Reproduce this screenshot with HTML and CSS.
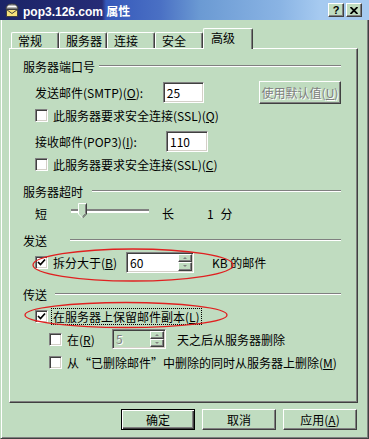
FILE: index.html
```html
<!DOCTYPE html>
<html lang="zh-CN">
    <head>
        <meta charset="UTF-8">
        <title>pop3.126.com 属性</title>
        <link rel="stylesheet" href="styles.css">
    </head>
    <body>
        <div class="window">
            <div class="titlebar">
                <svg class="app-icon" width="16" height="16" viewBox="0 0 16 16">
                    <path d="M2 7 Q2 2 8 2 Q14 2 14 7 Z" fill="#b8b8b8" stroke="#404040"/>
                    <path d="M4 4.5 H12" stroke="#fff"/>
                    <rect x="2.5" y="7.5" width="11" height="7" fill="#f6e27a" stroke="#404040"/>
                    <path d="M2.5 7.5 L8 11.5 L13.5 7.5" fill="none" stroke="#404040"/>
                </svg>
                <span class="title">pop3.126.com 属性</span>
                <div class="caption-btns">
                    <span class="cap-btn">?</span>
                    <span class="cap-btn">
                        <svg width="8" height="7" viewBox="0 0 8 7"><path d="M0.5 0 L7.5 7 M7.5 0 L0.5 7" stroke="#000" stroke-width="1.8"/></svg>
                    </span>
                </div>
            </div>

            <div class="body">
                <div class="tabs">
                    <div class="tab">常规</div>
                    <div class="tab">服务器</div>
                    <div class="tab">连接</div>
                    <div class="tab">安全</div>
                    <div class="tab active">高级</div>
                </div>

                <div class="panel">
                    <div class="group first"><span>服务器端口号</span><i class="sep"></i></div>
                    <div class="row field">
                        <span class="label">发送邮件(SMTP)(<u>O</u>):</span>
                        <span class="input">25</span>
                        <span class="btn disabled wide">使用默认值(<u>U</u>)</span>
                    </div>
                    <div class="row">
                        <span class="check"></span>
                        <span>此服务器要求安全连接(SSL)(<u>Q</u>)</span>
                    </div>
                    <div class="row field">
                        <span class="label">接收邮件(POP3)(<u>I</u>):</span>
                        <span class="input">110</span>
                    </div>
                    <div class="row">
                        <span class="check"></span>
                        <span>此服务器要求安全连接(SSL)(<u>C</u>)</span>
                    </div>

                    <div class="group"><span>服务器超时</span><i class="sep sep-timeout"></i></div>
                    <div class="row">
                        <span>短</span>
                        <div class="slider">
                            <i class="track"></i>
                            <svg class="thumb" width="9" height="16" viewBox="0 0 9 16">
                                <path d="M0.5 11 V0.5 H8.5 V11 L4.5 15 Z" fill="#c0dcc0"/>
                                <path d="M0.5 11 V0.5 H8" fill="none" stroke="#fff"/>
                                <path d="M8.5 0.5 V11 L4.5 15" fill="none" stroke="#404040"/>
                                <path d="M7.5 1.5 V10.5 L4.5 13.5" fill="none" stroke="#808080"/>
                                <path d="M0.5 11 L4.5 15" fill="none" stroke="#fff"/>
                            </svg>
                        </div>
                        <span>长</span>
                        <span class="timeout">1 分</span>
                    </div>

                    <div class="group"><span>发送</span><i class="sep sep-send"></i></div>
                    <div class="row">
                        <span class="check checked">
                            <svg width="9" height="9" viewBox="0 0 9 9"><path d="M1 4 L3.5 6.5 L8 1.5" fill="none" stroke="#000" stroke-width="1.7"/></svg>
                        </span>
                        <span class="label-split">拆分大于(<u>B</u>)</span>
                        <span class="spin">
                            <span class="spin-text">60</span>
                            <span class="spin-btns">
                                <span class="spin-btn"><i class="arrow-up"></i></span>
                                <span class="spin-btn"><i class="arrow-down"></i></span>
                            </span>
                        </span>
                        <span class="unit">KB 的邮件</span>
                    </div>

                    <div class="group group-deliver"><span>传送</span><i class="sep sep-deliver"></i></div>
                    <div class="row">
                        <span class="check checked">
                            <svg width="9" height="9" viewBox="0 0 9 9"><path d="M1 4 L3.5 6.5 L8 1.5" fill="none" stroke="#000" stroke-width="1.7"/></svg>
                        </span>
                        <span class="focus">在服务器上保留邮件副本(<u>L</u>)</span>
                    </div>
                    <div class="row sub">
                        <span class="check"></span>
                        <span class="label-days">在(<u>R</u>)</span>
                        <span class="spin spin-off">
                            <span class="spin-text">5</span>
                            <span class="spin-btns">
                                <span class="spin-btn"><i class="arrow-up"></i></span>
                                <span class="spin-btn"><i class="arrow-down"></i></span>
                            </span>
                        </span>
                        <span class="unit-days">天之后从服务器删除</span>
                    </div>
                    <div class="row sub">
                        <span class="check"></span>
                        <span>从“已删除邮件”中删除的同时从服务器上删除(<u>M</u>)</span>
                    </div>
                </div>

                <div class="buttons">
                    <span class="btn default">确定</span>
                    <span class="btn">取消</span>
                    <span class="btn">应用(<u>A</u>)</span>
                </div>
            </div>

            <!-- red hand-drawn marks over the screenshot -->
            <svg class="marks" width="369" height="439" viewBox="0 0 369 439">
                <ellipse cx="133" cy="265" rx="100" ry="16" fill="none" stroke="#e02020" stroke-width="1.3"/>
                <ellipse cx="126" cy="315" rx="101" ry="12.5" fill="none" stroke="#e02020" stroke-width="1.3"/>
            </svg>
        </div>
    </body>
</html>
```

FILE: styles.css
```css
body{
    margin: 0;
    font-family: "Noto Sans CJK SC", sans-serif;
    font-size: 12px;
    color: #000;
}
.window{
    width: 369px;
    height: 439px;
    display: flex;
    flex-direction: column;
    position: relative;
    background-color: #c0dcc0;
    overflow: hidden;
}
.titlebar{
    height: 20px;
    display: flex;
    align-items: center;
    flex: none;
    background: linear-gradient(90deg, #1b2467 0, #262c76 102px, #3558ba 106px, #4a70c4 160px, #6b9ad3 200px, #8ab4e4 280px, #a6caf0 320px);
}
.app-icon{
    margin: 0 3px 0 4px;
}
.title{
    color: #fff;
    font-family: "Liberation Sans", "Noto Sans CJK SC", sans-serif;
    font-weight: bold;
    font-size: 12px;
    flex: 1;
}
.caption-btns{
    display: flex;
    gap: 2px;
    margin-right: 7px;
}
.cap-btn{
    width: 16px;
    height: 14px;
    box-sizing: border-box;
    display: flex;
    align-items: center;
    justify-content: center;
    background-color: #c0dcc0;
    border: 1px solid;
    border-color: #fff #404040 #404040 #fff;
    box-shadow: inset -1px -1px #808080;
    font-family: "Liberation Sans", sans-serif;
    font-weight: bold;
    font-size: 11px;
    line-height: 12px;
}
.body{
    flex: 1;
    display: flex;
    flex-direction: column;
    padding: 8px 10px 0 8px;
    border-left: 1px solid #c0dcc0;
    border-right: 1px solid #404040;
    border-bottom: 1px solid #404040;
    box-shadow: inset 1px 0 #fff, inset -1px -1px #808080;
}
.tabs{
    display: flex;
    align-items: flex-end;
    height: 20px;
    margin-left: 2px;
    position: relative;
    z-index: 1;
}
.tab{
    width: 48px;
    height: 16px;
    box-sizing: border-box;
    padding-left: 6px;
    line-height: 15px;
    border-top: 1px solid #fff;
    border-left: 1px solid #fff;
    border-right: 1px solid #404040;
    border-radius: 2px 2px 0 0;
    box-shadow: inset -1px 0 #808080;
}
.tab.active{
    width: 50px;
    height: 21px;
    margin-bottom: -1px;
    padding-left: 7px;
    line-height: 17px;
    background-color: #c0dcc0;
}
.panel{
    height: 355px;
    box-sizing: border-box;
    padding: 6px 16px 0 13px;
    border-top: 1px solid #fff;
    border-left: 1px solid #fff;
    border-right: 1px solid #404040;
    border-bottom: 1px solid #404040;
    box-shadow: inset -1px -1px #808080;
}
.group{
    display: flex;
    align-items: center;
    height: 22px;
    margin-top: 5px;
}
.group.first{
    margin-top: 0;
}
.group.group-deliver{
    margin-top: 10px;
}
.sep{
    flex: 1;
    height: 0;
    border-top: 1px solid #808080;
    border-bottom: 1px solid #fff;
    margin-left: 4px;
}
.sep-timeout{
    margin-left: 9px;
}
.sep-send{
    margin-left: 23px;
}
.sep-deliver{
    margin-left: 8px;
}
.row{
    display: flex;
    align-items: center;
    height: 22px;
    margin-top: 1px;
    padding-left: 12px;
    white-space: nowrap;
}
.group + .row{
    margin-top: 0;
}
.row.field{
    margin-top: 4px;
}
.row.sub{
    padding-left: 26px;
}
.label{
    width: 131px;
}
.input{
    width: 42px;
    height: 21px;
    box-sizing: border-box;
    padding-left: 3px;
    line-height: 19px;
    background-color: #fff;
    border: 1px solid;
    border-color: #808080 #fff #fff #808080;
    box-shadow: inset 1px 1px #404040, inset -1px -1px #d4d0c8;
}
.check{
    width: 13px;
    height: 13px;
    box-sizing: border-box;
    flex: none;
    display: flex;
    align-items: center;
    justify-content: center;
    margin-right: 5px;
    background-color: #fff;
    border: 1px solid;
    border-color: #808080 #fff #fff #808080;
    box-shadow: inset 1px 1px #404040, inset -1px -1px #d4d0c8;
}
.btn{
    width: 74px;
    height: 21px;
    box-sizing: border-box;
    display: flex;
    align-items: center;
    justify-content: center;
    background-color: #c0dcc0;
    border: 1px solid;
    border-color: #fff #404040 #404040 #fff;
    box-shadow: inset -1px -1px #808080;
}
.btn.wide{
    width: 84px;
    height: 23px;
    margin-left: 55px;
}
.btn.disabled{
    color: #808080;
    text-shadow: 1px 1px #fff;
}
.btn.default{
    border-color: #000;
    box-shadow: inset 1px 1px #fff, inset -1px -1px #404040, inset -2px -2px #808080;
}
.slider{
    position: relative;
    width: 78px;
    height: 22px;
    margin: 0 13px 0 24px;
}
.track{
    display: block;
    height: 0;
    margin-top: 7px;
    border-top: 2px solid;
    border-bottom: 2px solid;
    border-color: #808080 #fff #fff #808080;
}
.thumb{
    position: absolute;
    left: 7px;
    top: 1px;
}
.timeout{
    margin-left: 33px;
    word-spacing: 4px;
}
.label-split{
    width: 73px;
}
.spin{
    width: 68px;
    height: 21px;
    box-sizing: border-box;
    display: flex;
    background-color: #fff;
    border: 1px solid;
    border-color: #808080 #fff #fff #808080;
    box-shadow: inset 1px 1px #404040, inset -1px -1px #d4d0c8;
    padding: 1px;
}
.spin-text{
    flex: 1;
    padding-left: 2px;
    line-height: 17px;
}
.spin-btns{
    width: 14px;
    display: flex;
    flex-direction: column;
}
.spin-btn{
    flex: 1;
    display: flex;
    align-items: center;
    justify-content: center;
    background-color: #c0dcc0;
    border: 1px solid;
    border-color: #fff #404040 #404040 #fff;
    box-shadow: inset -1px -1px #808080;
}
.arrow-up,
.arrow-down{
    width: 0;
    height: 0;
    border-left: 2px solid transparent;
    border-right: 2px solid transparent;
}
.arrow-up{
    border-bottom: 2px solid #808080;
}
.arrow-down{
    border-top: 2px solid #808080;
}
.spin-off{
    width: 54px;
    height: 20px;
    background-color: #c0dcc0;
    color: #808080;
}
.spin-off .spin-text{
    line-height: 16px;
    text-shadow: 1px 1px #fff;
}
.unit{
    margin-left: 18px;
}
.label-days{
    width: 45px;
}
.unit-days{
    margin-left: 11px;
}
.focus{
    outline: 1px dotted #000;
    outline-offset: 0;
    padding: 0 1px;
    margin-left: -1px;
    line-height: 15px;
}
.buttons{
    display: flex;
    justify-content: flex-end;
    gap: 7px;
    margin-top: 6px;
    padding-right: 1px;
}
.marks{
    position: absolute;
    left: 0;
    top: 0;
    pointer-events: none;
}
```
